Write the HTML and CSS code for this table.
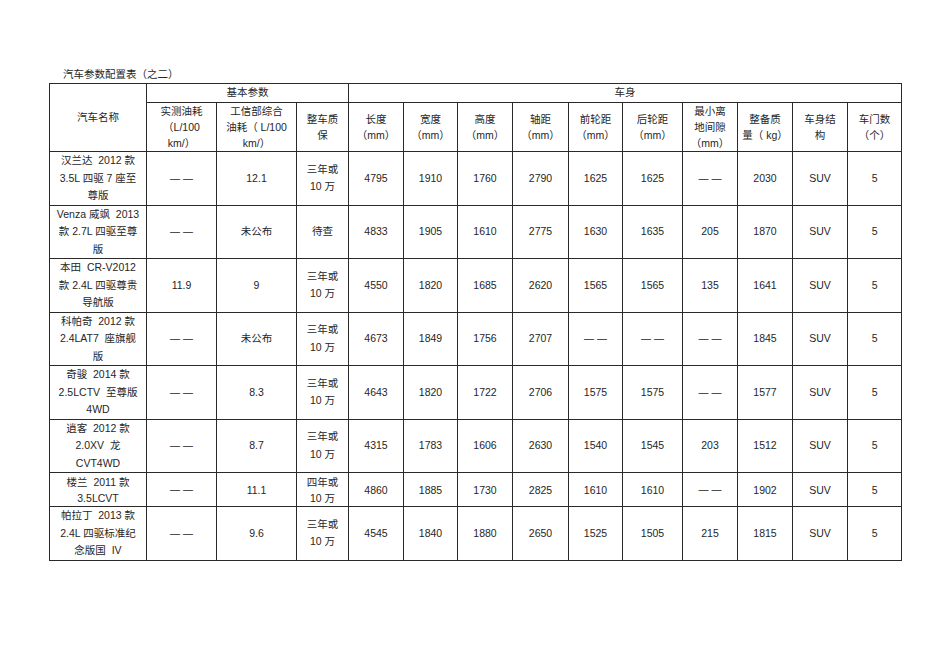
FILE: index.html
```html
<!DOCTYPE html>
<html lang="zh">
<head>
<meta charset="utf-8">
<title>汽车参数配置表（之二）</title>
<link rel="stylesheet" href="styles.css">
</head>
<body>
<div class="page">
  <div class="title">汽车参数配置表（之二）</div>
  <table class="spec">
    <colgroup>
      <col class="c-name"><col class="c-fuel"><col class="c-fuel2"><col class="c-warr">
      <col class="c-len"><col class="c-wid"><col class="c-hei"><col class="c-wb">
      <col class="c-ft"><col class="c-rt"><col class="c-gc"><col class="c-mass">
      <col class="c-body"><col class="c-door">
    </colgroup>
    <thead>
      <tr class="grp">
        <th rowspan="2">汽车名称</th>
        <th colspan="3">基本参数</th>
        <th colspan="10">车身</th>
      </tr>
      <tr class="sub">
        <th>实测油耗<br>（L/100<br>km/）</th>
        <th>工信部综合<br>油耗（ L/100<br>km/）</th>
        <th>整车质<br>保</th>
        <th>长度<br>（mm）</th>
        <th>宽度<br>（mm）</th>
        <th>高度<br>（mm）</th>
        <th>轴距<br>（mm）</th>
        <th>前轮距<br>（mm）</th>
        <th>后轮距<br>（mm）</th>
        <th>最小离<br>地间隙<br>（mm）</th>
        <th>整备质<br>量（ kg）</th>
        <th>车身结<br>构</th>
        <th>车门数<br>（个）</th>
      </tr>
    </thead>
    <tbody>
      <tr>
        <td>汉兰达&nbsp; 2012 款<br>3.5L 四驱 7 座至<br>尊版</td>
        <td><span class="na">——</span></td><td>12.1</td><td>三年或<br>10 万</td>
        <td>4795</td><td>1910</td><td>1760</td><td>2790</td><td>1625</td><td>1625</td>
        <td><span class="na">——</span></td><td>2030</td><td>SUV</td><td>5</td>
      </tr>
      <tr>
        <td>Venza 威飒&nbsp; 2013<br>款 2.7L 四驱至尊<br>版</td>
        <td><span class="na">——</span></td><td>未公布</td><td>待查</td>
        <td>4833</td><td>1905</td><td>1610</td><td>2775</td><td>1630</td><td>1635</td>
        <td>205</td><td>1870</td><td>SUV</td><td>5</td>
      </tr>
      <tr>
        <td>本田&nbsp; CR-V2012<br>款 2.4L 四驱尊贵<br>导航版</td>
        <td>11.9</td><td>9</td><td>三年或<br>10 万</td>
        <td>4550</td><td>1820</td><td>1685</td><td>2620</td><td>1565</td><td>1565</td>
        <td>135</td><td>1641</td><td>SUV</td><td>5</td>
      </tr>
      <tr>
        <td>科帕奇&nbsp; 2012 款<br>2.4LAT7&nbsp; 座旗舰<br>版</td>
        <td><span class="na">——</span></td><td>未公布</td><td>三年或<br>10 万</td>
        <td>4673</td><td>1849</td><td>1756</td><td>2707</td><td><span class="na">——</span></td><td><span class="na">——</span></td>
        <td><span class="na">——</span></td><td>1845</td><td>SUV</td><td>5</td>
      </tr>
      <tr>
        <td>奇骏&nbsp; 2014 款<br>2.5LCTV&nbsp; 至尊版<br>4WD</td>
        <td><span class="na">——</span></td><td>8.3</td><td>三年或<br>10 万</td>
        <td>4643</td><td>1820</td><td>1722</td><td>2706</td><td>1575</td><td>1575</td>
        <td><span class="na">——</span></td><td>1577</td><td>SUV</td><td>5</td>
      </tr>
      <tr>
        <td>逍客&nbsp; 2012 款<br>2.0XV&nbsp; 龙<br>CVT4WD</td>
        <td><span class="na">——</span></td><td>8.7</td><td>三年或<br>10 万</td>
        <td>4315</td><td>1783</td><td>1606</td><td>2630</td><td>1540</td><td>1545</td>
        <td>203</td><td>1512</td><td>SUV</td><td>5</td>
      </tr>
      <tr class="short">
        <td>楼兰&nbsp; 2011 款<br>3.5LCVT</td>
        <td><span class="na">——</span></td><td>11.1</td><td>四年或<br>10 万</td>
        <td>4860</td><td>1885</td><td>1730</td><td>2825</td><td>1610</td><td>1610</td>
        <td><span class="na">——</span></td><td>1902</td><td>SUV</td><td>5</td>
      </tr>
      <tr>
        <td>帕拉丁&nbsp; 2013 款<br>2.4L 四驱标准纪<br>念版国&nbsp; IV</td>
        <td><span class="na">——</span></td><td>9.6</td><td>三年或<br>10 万</td>
        <td>4545</td><td>1840</td><td>1880</td><td>2650</td><td>1525</td><td>1505</td>
        <td>215</td><td>1815</td><td>SUV</td><td>5</td>
      </tr>
    </tbody>
  </table>
</div>
</body>
</html>
```

FILE: styles.css
```css
html, body {
  margin: 0;
  padding: 0;
  background: #ffffff;
}

body {
  font-family: "Liberation Sans", "Noto Sans CJK SC", sans-serif;
  font-size: 10.5px;
  color: #262626;
}

.page {
  padding: 65px 0 0 49px;
}

.title {
  padding-left: 14px;
  line-height: 18px;
  height: 18px;
}

.spec {
  border-collapse: collapse;
  table-layout: fixed;
  width: 853px;
}

.spec th,
.spec td {
  border: 1px solid #2a2a2a;
  text-align: center;
  vertical-align: middle;
  font-weight: normal;
  padding: 0;
  white-space: nowrap;
  overflow: hidden;
}

.spec td {
  line-height: 17.5px;
  height: 52.5px;
}

.spec tr.short td {
  height: 33px;
  line-height: 16px;
}

.spec .grp th {
  height: 17.5px;
  line-height: 17px;
}

.spec .sub th {
  height: 48.5px;
  line-height: 16px;
}

.na {
  font-family: "Liberation Sans", sans-serif;
  font-size: 10px;
  letter-spacing: 3px;
  margin-right: -3px;
}

.c-name { width: 97px; }
.c-fuel { width: 70px; }
.c-fuel2 { width: 80px; }
.c-warr { width: 52px; }
.c-len { width: 55px; }
.c-wid { width: 54px; }
.c-hei { width: 55px; }
.c-wb { width: 56px; }
.c-ft { width: 54px; }
.c-rt { width: 60px; }
.c-gc { width: 55px; }
.c-mass { width: 55px; }
.c-body { width: 55px; }
.c-door { width: 54px; }
```
